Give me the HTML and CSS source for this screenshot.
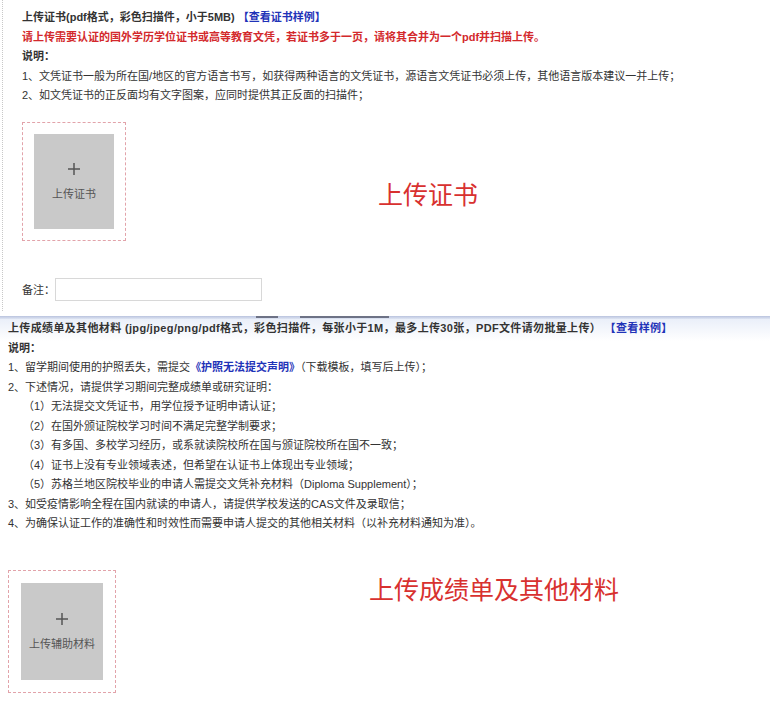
FILE: index.html
```html
<!DOCTYPE html>
<html lang="zh-CN">
<head>
<meta charset="utf-8">
<title>上传材料</title>
<link rel="stylesheet" href="styles.css">
</head>
<body>
<section class="sec1">
  <p class="line bold">上传证书(pdf格式，彩色扫描件，小于5MB) <span class="link">【查看证书样例】</span></p>
  <p class="line red bold">请上传需要认证的国外学历学位证书或高等教育文凭，若证书多于一页，请将其合并为一个pdf并扫描上传。</p>
  <p class="line bold">说明：</p>
  <p class="line">1、文凭证书一般为所在国/地区的官方语言书写，如获得两种语言的文凭证书，源语言文凭证书必须上传，其他语言版本建议一并上传；</p>
  <p class="line">2、如文凭证书的正反面均有文字图案，应同时提供其正反面的扫描件；</p>
  <div class="upload-row row1">
    <div class="upload box1">
      <div class="tile tile1">
        <svg class="plus" width="14" height="14" viewBox="0 0 14 14"><path d="M7 1V13M1 7H13" stroke="#555" stroke-width="1.5" fill="none"/></svg>
        <span class="tile-text">上传证书</span>
      </div>
    </div>
    <div class="big-label big1">上传证书</div>
  </div>
  <div class="note-row">
    <span class="note-label">备注：</span>
    <input class="note-input" type="text">
  </div>
</section>
<div class="seam"><span class="seg seg1"></span><span class="seg seg2"></span></div>
<section class="sec2">
  <p class="line bold title2">上传成绩单及其他材料 (jpg/jpeg/png/pdf格式，彩色扫描件，每张小于1M，最多上传30张，PDF文件请勿批量上传） <span class="link">【查看样例】</span></p>
  <p class="line bold">说明：</p>
  <p class="line">1、留学期间使用的护照丢失，需提交<span class="link">《护照无法提交声明》</span>（下载模板，填写后上传）；</p>
  <p class="line">2、下述情况，请提供学习期间完整成绩单或研究证明：</p>
  <p class="line sub">（1）无法提交文凭证书，用学位授予证明申请认证；</p>
  <p class="line sub">（2）在国外颁证院校学习时间不满足完整学制要求；</p>
  <p class="line sub">（3）有多国、多校学习经历，或系就读院校所在国与颁证院校所在国不一致；</p>
  <p class="line sub">（4）证书上没有专业领域表述，但希望在认证书上体现出专业领域；</p>
  <p class="line sub">（5）苏格兰地区院校毕业的申请人需提交文凭补充材料（Diploma Supplement）；</p>
  <p class="line">3、如受疫情影响全程在国内就读的申请人，请提供学校发送的CAS文件及录取信；</p>
  <p class="line">4、为确保认证工作的准确性和时效性而需要申请人提交的其他相关材料（以补充材料通知为准）。</p>
  <div class="upload-row row2">
    <div class="upload box2">
      <div class="tile tile2">
        <svg class="plus" width="14" height="14" viewBox="0 0 14 14"><path d="M7 1V13M1 7H13" stroke="#555" stroke-width="1.5" fill="none"/></svg>
        <span class="tile-text">上传辅助材料</span>
      </div>
    </div>
    <div class="big-label big2">上传成绩单及其他材料</div>
  </div>
</section>
</body>
</html>
```
FILE: styles.css
```css
html, body {
  margin: 0;
  padding: 0;
  background: #fff;
}
body {
  font-family: "Liberation Sans", "Noto Sans CJK SC", sans-serif;
  font-size: 11px;
  color: #333;
  width: 770px;
  height: 720px;
  overflow: hidden;
}
.line {
  margin: 0;
  line-height: 19.5px;
  white-space: nowrap;
}
.bold { font-weight: bold; }
.red { color: #d3292c; }
.link { color: #1f33b8; font-weight: bold; }
.title2 { letter-spacing: 0.35px; }

.sec1 {
  margin-left: 2px;
  border-left: 1px dotted #c8c8c8;
  padding: 8px 0 0 19px;
  height: 303px;
}
.upload-row {
  display: flex;
  align-items: flex-start;
}
.row1 { margin-top: 16px; }
.upload {
  border: 1px dashed #e2a3aa;
  display: flex;
}
.box1 { padding: 11px; }
.box2 { padding: 12px; }
.tile {
  background: #c9c9c9;
  display: flex;
  flex-direction: column;
  align-items: center;
  justify-content: center;
  gap: 10px;
}
.tile1 { width: 80px; height: 95px; }
.tile2 { width: 82px; height: 97px; }
.tile-text {
  font-family: "Noto Sans CJK SC", sans-serif;
  font-size: 11px;
  line-height: 14px;
  color: #555;
  white-space: nowrap;
}
.plus { display: block; }
.big-label {
  font-family: "Noto Sans CJK SC", sans-serif;
  color: #d8312f;
  font-size: 25px;
  line-height: 30px;
  white-space: nowrap;
}
.big1 { margin-left: 252px; margin-top: 56px; }
.big2 { margin-left: 253px; margin-top: 3px; }

.note-row {
  display: flex;
  align-items: center;
  margin-top: 37px;
}
.note-label {
  width: 33px;
  white-space: nowrap;
}
.note-input {
  width: 207px;
  height: 23px;
  box-sizing: border-box;
  border: 1px solid #d8d8d8;
  margin: 0;
  padding: 0;
}

.seam {
  height: 3px;
  background: linear-gradient(#b9c3de, #dfe5f3);
  display: flex;
  align-items: flex-start;
  margin-top: 5px;
}
.seg {
  display: block;
  height: 2px;
  background: #6d7286;
}
.seg1 { width: 22px; margin-left: 256px; }
.seg2 { width: 89px; margin-left: 22px; }

.sec2 {
  background: linear-gradient(#eaeff9, #ffffff 22px);
  padding: 0 0 0 8px;
}
.sub { padding-left: 15px; }
.row2 { margin-top: 36px; }
```
